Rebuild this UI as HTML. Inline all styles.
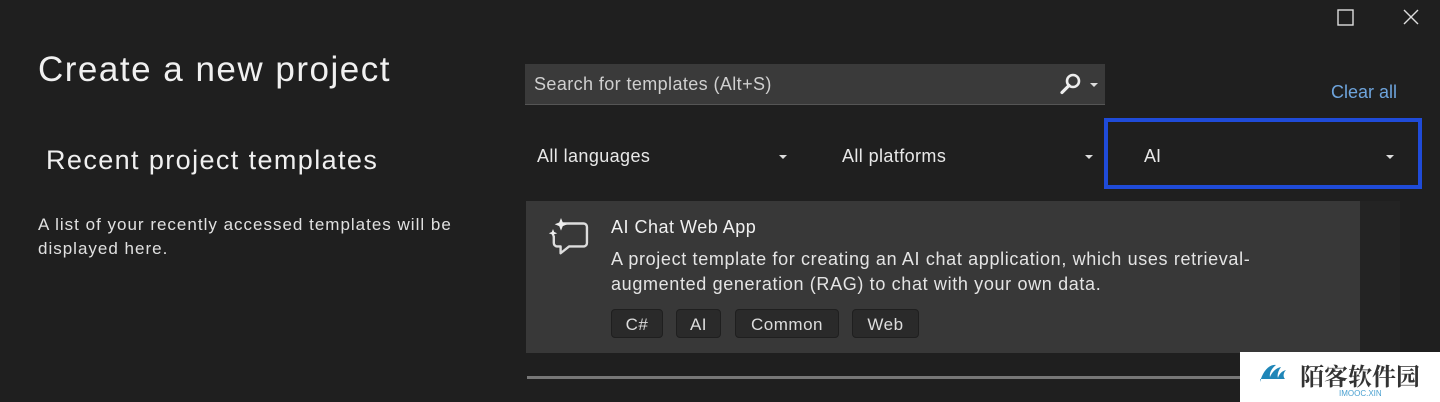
<!DOCTYPE html>
<html><head><style>
body{margin:0;width:1440px;height:402px;background:#1f1f1f;position:relative;overflow:hidden;font-family:"Segoe UI","Liberation Sans",sans-serif;color:#e8e8e8}
.a{position:absolute;white-space:nowrap}
.tag{position:absolute;top:309px;height:29px;border:1px solid #1f1f1f;background:#2a2a2a;border-radius:4px;box-sizing:border-box;font-size:17px;line-height:29px;text-align:center;color:#ddd;letter-spacing:0.5px}
.dd{position:absolute;width:0;height:0;border-left:4px solid transparent;border-right:4px solid transparent;border-top:4px solid #ddd}
</style></head><body>
<div class="a" style="left:38px;top:50px;font-size:35px;color:#f0f0f0;letter-spacing:1.5px">Create a new project</div>
<div class="a" style="left:46px;top:145px;font-size:27px;color:#f0f0f0;letter-spacing:1.4px">Recent project templates</div>
<div class="a" style="left:38px;top:213px;font-size:17px;line-height:24px;color:#e0e0e0;letter-spacing:1px">A list of your recently accessed templates will be<br>displayed here.</div>

<div class="a" style="left:525px;top:64px;width:580px;height:40px;background:#3a3a3a;border-bottom:1px solid #555"></div>
<div class="a" style="left:534px;top:74px;font-size:18px;color:#cfcfcf;letter-spacing:0.4px">Search for templates (Alt+S)</div>
<svg class="a" style="left:1058px;top:72px" width="26" height="26" viewBox="0 0 26 26"><circle cx="15" cy="9" r="6" fill="none" stroke="#eee" stroke-width="2.6"/><line x1="11" y1="13.5" x2="4" y2="20.5" stroke="#eee" stroke-width="3.2" stroke-linecap="round"/></svg>
<div class="dd" style="left:1090px;top:83px"></div>
<div class="a" style="left:1331px;top:82px;font-size:18px;color:#6ea4dc">Clear all</div>

<svg class="a" style="left:1337px;top:9px" width="18" height="18"><rect x="1" y="1" width="15" height="15" fill="none" stroke="#ddd" stroke-width="1.4"/></svg>
<svg class="a" style="left:1402px;top:8px" width="18" height="18"><path d="M2 2L16 16M16 2L2 16" stroke="#ddd" stroke-width="1.4"/></svg>

<div class="a" style="left:537px;top:146px;font-size:18px;letter-spacing:0.4px">All languages</div>
<div class="dd" style="left:779px;top:155px"></div>
<div class="a" style="left:842px;top:146px;font-size:18px;letter-spacing:0.4px">All platforms</div>
<div class="dd" style="left:1085px;top:155px"></div>
<div class="a" style="left:1104px;top:118px;width:310px;height:63px;border:4px solid #1f4bd8"></div>
<div class="a" style="left:1144px;top:146px;font-size:18px">AI</div>
<div class="dd" style="left:1386px;top:155px"></div>

<div class="a" style="left:1360px;top:201px;width:40px;height:152px;background:#232323"></div>
<div class="a" style="left:526px;top:201px;width:834px;height:152px;background:#383838"></div>
<svg class="a" style="left:545px;top:215px" width="54" height="60" viewBox="0 0 50 60"><path d="M17 10H43a4 4 0 0 1 4 4V33a4 4 0 0 1-4 4H26L16 45V37h-4a4 4 0 0 1-4-4V24" fill="none" stroke="#ddd" stroke-width="2.8" stroke-linejoin="round" transform="scale(0.85)"/><path d="M14 3l1.8 4.5 4.5 1.8-4.5 1.8-1.8 4.5-1.8-4.5-4.5-1.8 4.5-1.8z" fill="#eee"/><path d="M6 14l1.2 3 3 1.2-3 1.2-1.2 3-1.2-3-3-1.2 3-1.2z" fill="#eee"/></svg>
<div class="a" style="left:611px;top:217px;font-size:18px;color:#f0f0f0;letter-spacing:0.5px">AI Chat Web App</div>
<div class="a" style="left:611px;top:247px;font-size:18px;line-height:25px;color:#e4e4e4;letter-spacing:0.65px">A project template for creating an AI chat application, which uses retrieval-<br>augmented generation (RAG) to chat with your own data.</div>
<div class="tag" style="left:611px;width:52px">C#</div>
<div class="tag" style="left:676px;width:45px">AI</div>
<div class="tag" style="left:735px;width:104px">Common</div>
<div class="tag" style="left:852px;width:67px">Web</div>

<div class="a" style="left:527px;top:376px;width:713px;height:3px;background:#777"></div>

<div class="a" style="left:1240px;top:352px;width:200px;height:50px;background:#fff"></div>
<svg class="a" style="left:1258px;top:360px" width="40" height="26" viewBox="0 0 40 26"><path d="M2 22C5 10 12 4 18 5c-4 3-7 8-6 12 2-5 6-9 11-10-3 4-4 8-3 11 1-4 4-7 8-8-3 3-3 7-1 9H2z" fill="#1f86b8"/></svg>
<div class="a" style="left:1300px;top:357px;font-size:24px;color:#333;font-family:'Noto Serif CJK SC','Noto Sans CJK SC',serif;font-weight:bold">陌客软件园</div>
<div class="a" style="left:1339px;top:389px;font-size:8px;color:#4aa0d0">IMOOC.XIN</div>
</body></html>
